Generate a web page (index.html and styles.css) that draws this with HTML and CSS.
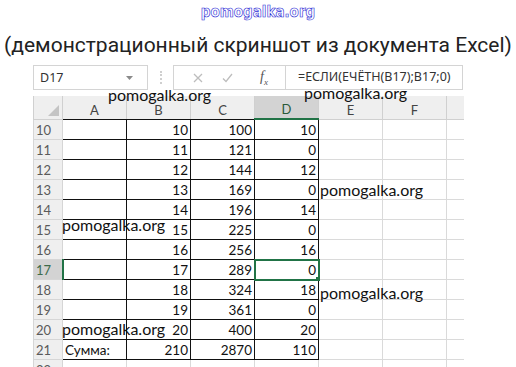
FILE: index.html
```html
<!DOCTYPE html>
<html lang="ru">
<head>
<meta charset="utf-8">
<link rel="stylesheet" href="styles.css">
</head>
<body>
<div class="logo">pomogalka.org</div>
<div class="subtitle">(демонстрационный скриншот из документа Excel)</div>
<div class="excel">
  <div class="fbar">
    <div class="namebox"><span>D17</span><svg class="drop" width="7" height="4" viewBox="0 0 7 4"><path d="M0 0h7L3.5 4z" fill="#8a8a8a"/></svg></div>
    <div class="grip"></div>
    <div class="btns">
      <svg width="10" height="10" viewBox="0 0 10 10"><path d="M1 1l8 8M9 1l-8 8" stroke="#bdbdbd" stroke-width="1.3"/></svg>
      <svg width="11" height="10" viewBox="0 0 11 10"><path d="M1 5.5l3 3L10 1" stroke="#bdbdbd" stroke-width="1.3" fill="none"/></svg>
      <span class="fx">f<sub>x</sub></span>
    </div>
    <div class="formula">=ЕСЛИ(ЕЧЁТН(B17);B17;0)</div>
  </div>
  <table class="sheet">
    <colgroup><col class="c-rh"><col class="c-w"><col class="c-w"><col class="c-w"><col class="c-w"><col class="c-w"><col class="c-w"><col class="c-g"></colgroup>
    <tr class="hdr">
      <th class="corner"></th><th class="hb">A</th><th class="hb">B</th><th class="hb">C</th><th class="hsel">D</th><th>E</th><th>F</th><th class="last"></th>
    </tr>
    <tr><th>10</th><td class="t"></td><td class="t">10</td><td class="t">100</td><td class="t">10</td><td></td><td></td><td></td></tr>
    <tr><th>11</th><td class="t"></td><td class="t">11</td><td class="t">121</td><td class="t">0</td><td></td><td></td><td></td></tr>
    <tr><th>12</th><td class="t"></td><td class="t">12</td><td class="t">144</td><td class="t">12</td><td></td><td></td><td></td></tr>
    <tr><th>13</th><td class="t"></td><td class="t">13</td><td class="t">169</td><td class="t">0</td><td></td><td></td><td></td></tr>
    <tr><th>14</th><td class="t"></td><td class="t">14</td><td class="t">196</td><td class="t">14</td><td></td><td></td><td></td></tr>
    <tr><th>15</th><td class="t"></td><td class="t">15</td><td class="t">225</td><td class="t">0</td><td></td><td></td><td></td></tr>
    <tr><th>16</th><td class="t"></td><td class="t">16</td><td class="t">256</td><td class="t">16</td><td></td><td></td><td></td></tr>
    <tr><th class="rsel">17</th><td class="t"></td><td class="t">17</td><td class="t">289</td><td class="t active">0</td><td></td><td></td><td></td></tr>
    <tr><th>18</th><td class="t"></td><td class="t">18</td><td class="t">324</td><td class="t">18</td><td></td><td></td><td></td></tr>
    <tr><th>19</th><td class="t"></td><td class="t">19</td><td class="t">361</td><td class="t">0</td><td></td><td></td><td></td></tr>
    <tr><th>20</th><td class="t"></td><td class="t">20</td><td class="t">400</td><td class="t">20</td><td></td><td></td><td></td></tr>
    <tr><th>21</th><td class="t txt">Сумма:</td><td class="t">210</td><td class="t">2870</td><td class="t">110</td><td></td><td></td><td></td></tr>
    <tr><th>22</th><td></td><td></td><td></td><td></td><td></td><td></td><td></td></tr>
  </table>
</div>
<div class="wm wm1">pomogalka.org</div>
<div class="wm wm2">pomogalka.org</div>
<div class="wm wm3">pomogalka.org</div>
<div class="wm wm4">pomogalka.org</div>
<div class="wm wm5">pomogalka.org</div>
<div class="wm wm6">pomogalka.org</div>
</body>
</html>
```
FILE: styles.css
```css
html, body { margin: 0; padding: 0; background: #fff; }
body { width: 516px; height: 367px; overflow: hidden; position: relative; }

.logo {
  height: 25px;
  line-height: 24px;
  text-align: center;
  font-family: "DejaVu Sans Condensed", "DejaVu Sans", sans-serif;
  font-weight: bold;
  font-size: 15px;
  color: #fff;
  -webkit-text-stroke: 0.6px #2b2bd6;
}
.subtitle {
  height: 40px;
  line-height: 40px;
  text-align: center;
  font-family: Roboto, "Noto Sans", sans-serif;
  font-size: 21px;
  letter-spacing: 0;
  color: #222;
  white-space: nowrap;
}

.excel { margin-left: 33px; width: 430px; }

.fbar { display: flex; height: 25px; margin-bottom: 6px; font-family: "Noto Sans", "Open Sans", sans-serif; font-size: 12.5px; color: #333; }
.namebox { width: 115px; box-sizing: border-box; border: 1px solid #d4d4d4; display: flex; align-items: center; justify-content: space-between; padding: 0 14px 0 6px; }
.grip { width: 25px; display: flex; justify-content: center; }
.grip::before { content: ""; width: 0; margin-top: 6px; height: 13px; border-left: 2px dotted #cfcfcf; }
.btns { width: 112px; box-sizing: border-box; border: 1px solid #d4d4d4; border-right: none; display: flex; align-items: center; padding-left: 19px; gap: 19px; }
.fx { font-family: "Liberation Serif", serif; font-style: italic; font-size: 14px; color: #555; margin-left: 8px; }
.fx sub { font-size: 9px; }
.formula { flex: 1; box-sizing: border-box; border: 1px solid #d4d4d4; padding-left: 12px; line-height: 22px; white-space: nowrap; }

.sheet { border-collapse: collapse; table-layout: fixed; width: 430px; font-family: Lato, "Liberation Sans", sans-serif; font-size: 13.5px; color: #111; }
.c-rh { width: 29px; }
.c-w { width: 64px; }
.c-g { width: 17px; }
.sheet tr { height: 20px; }
.sheet td, .sheet th { border: 1px solid #dadada; padding: 0 2px; height: 19px; line-height: 17px; vertical-align: bottom; overflow: hidden; white-space: nowrap; }
.sheet td { text-align: right; }
.sheet th { background: #efefef; font-weight: normal; color: #5a5a5a; text-align: left; font-size: 13px; border-color: #d6d6d6; }
.sheet .hdr { height: 23px; }
.sheet .hdr th { text-align: center; height: 22px; line-height: 18px; border-top: none; color: #444; font-size: 13px; border-color: #d0d0d0; }
.sheet .hdr th.hb { border-bottom-color: #111; }
.sheet .hdr th.hsel { background: #d3d3d3; border-bottom: 2px solid #217346; color: #2a5a3a; }
.sheet .hdr th.last { border-right: none; }
.corner { position: relative; }
.corner::after { content: ""; position: absolute; right: 3px; bottom: 3px; width: 0; height: 0; border-left: 11px solid transparent; border-bottom: 11px solid #c4c4c4; }
.sheet th.rsel { background: #d3d3d3; border-right: 2px solid #217346; color: #3d6b4b; }
.sheet td.t { border-color: #111; }
.sheet td.txt { text-align: left; }
.sheet td.active { position: relative; outline: 2px solid #217346; outline-offset: -1px; }
.sheet td.active::after { content: ""; position: absolute; right: -4px; bottom: -4px; width: 5px; height: 5px; background: #217346; border: 1px solid #fff; }
.sheet td:last-child { border-right: none; }

.wm { position: absolute; font-family: Lato, "Liberation Sans", sans-serif; font-size: 16px; line-height: 16px; color: #111; white-space: nowrap; }
.wm1 { left: 108px; top: 87px; }
.wm2 { left: 304px; top: 85px; }
.wm3 { left: 320px; top: 182px; }
.wm4 { left: 62px; top: 217px; }
.wm5 { left: 320px; top: 285px; }
.wm6 { left: 62px; top: 321px; }
```
